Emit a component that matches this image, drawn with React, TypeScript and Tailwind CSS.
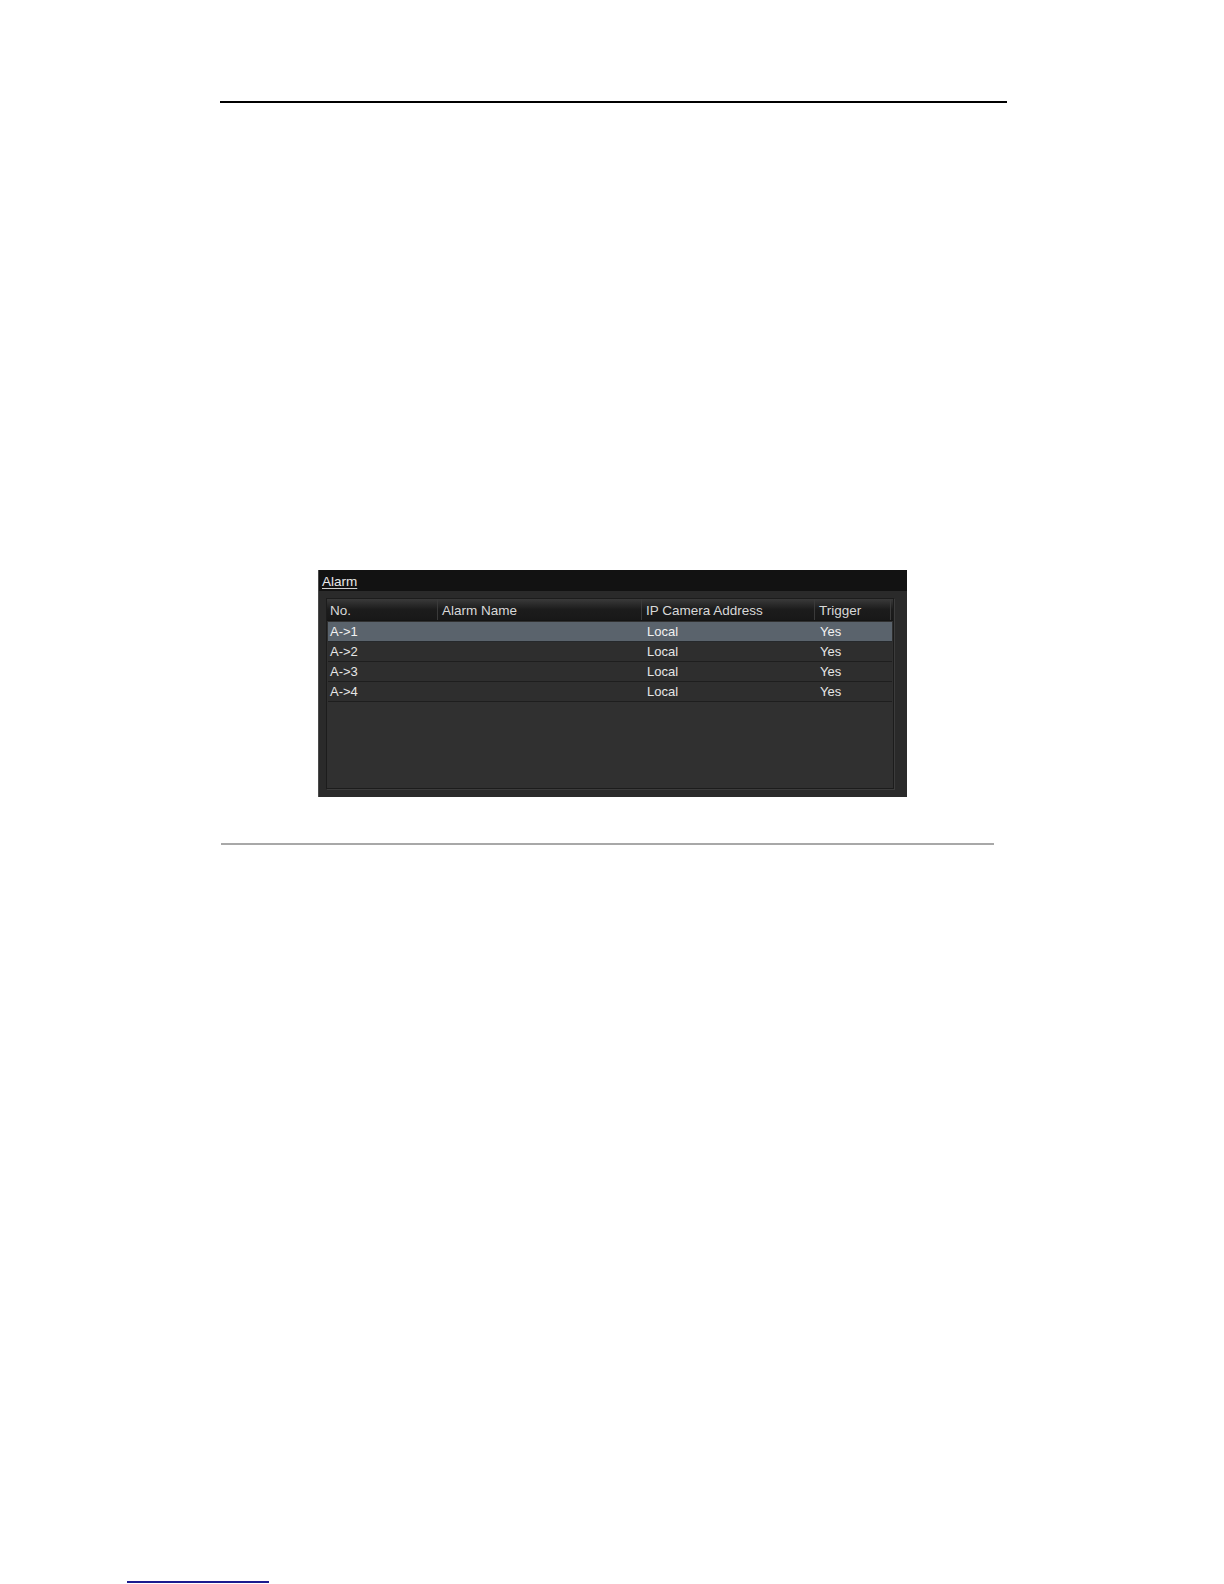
const rows = [
  { no: "A->1", name: "", ip: "Local", trigger: "Yes" },
  { no: "A->2", name: "", ip: "Local", trigger: "Yes" },
  { no: "A->3", name: "", ip: "Local", trigger: "Yes" },
  { no: "A->4", name: "", ip: "Local", trigger: "Yes" },
];

const App = () => {
  return (
    <div className="relative w-[1224px] h-[1584px] bg-white font-['Liberation_Sans',Arial,sans-serif] overflow-hidden">
      <div className="pt-[101px] pl-[220px]">
        <div className="w-[787px] h-[2px] bg-black" />
      </div>

      <div className="mt-[467px] ml-[318px] w-[589px] h-[227px] bg-[#2a2a2a] border-l border-[#4a4a4a] flex flex-col">
        <div className="h-[21px] bg-[#121212] flex items-end pl-[3px] pb-[2px]">
          <span className="text-[13.5px] leading-[15px] text-[#e8e8e8] underline underline-offset-2 decoration-[#cfcfcf]">
            Alarm
          </span>
        </div>

        <div className="mt-[7px] ml-[7px] mr-[13px] h-[191px] bg-[#303030] border border-[#1c1c1c] shadow-[1px_1px_0_#3c3c3c] text-[13px] leading-[20px]">
          <div className="flex h-[22px] bg-gradient-to-b from-[#3a3a3a] via-[#1c1c1c] to-[#181818] text-[#d8d8d8] text-[13.5px] border-b border-[#141414]">
            <div className="w-[111px] pl-[3px] border-r border-[#3a3a3a] flex items-end leading-[19px]">No.</div>
            <div className="w-[204px] pl-[4px] border-r border-[#3a3a3a] flex items-end leading-[19px]">Alarm Name</div>
            <div className="w-[173px] pl-[4px] border-r border-[#3a3a3a] flex items-end leading-[19px]">IP Camera Address</div>
            <div className="w-[76px] pl-[4px] border-r border-[#3a3a3a] flex items-end leading-[19px]">Trigger</div>
          </div>
          <div className="mt-[1px] mx-[1px]">
            {rows.map((r, i) => (
              <div
                key={i}
                className={
                  i === 0
                    ? "flex h-[20px] bg-[#5a636c] text-[#f2f2f2] border-b border-[#26292c]"
                    : "flex h-[20px] bg-[#2e2e2e] text-[#e6e6e6] border-b border-[#1e1e1e]"
                }
              >
                <div className="w-[111px] pl-[2px]">{r.no}</div>
                <div className="w-[204px] pl-[4px]">{r.name}</div>
                <div className="w-[173px] pl-[4px]">{r.ip}</div>
                <div className="w-[76px] pl-[4px]">{r.trigger}</div>
              </div>
            ))}
          </div>
        </div>
      </div>

      <div className="mt-[46px] ml-[221px] w-[773px] h-[2px] bg-[#a8a8a8]" />

      <div className="mt-[736px] ml-[127px] w-[142px] h-[1.5px] bg-[#1b1b8f]" />
    </div>
  );
};

export default App;
